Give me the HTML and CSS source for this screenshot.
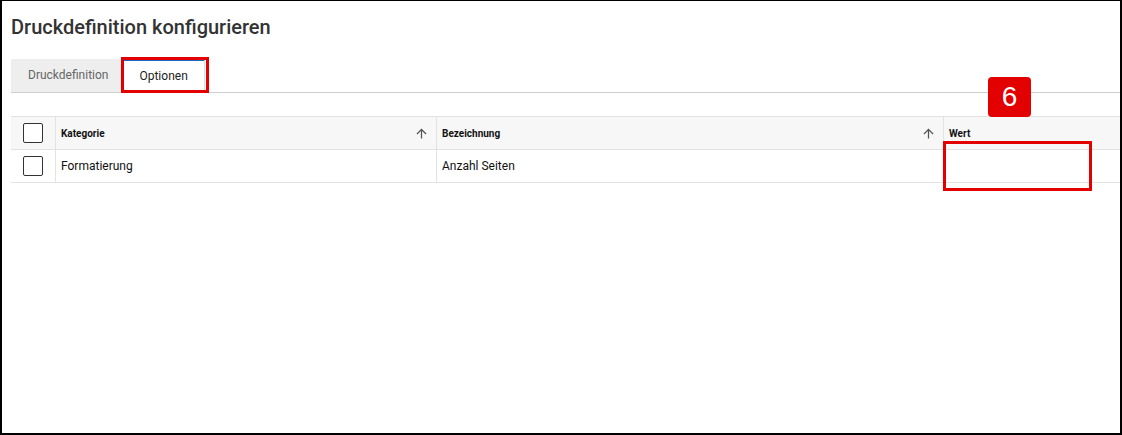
FILE: index.html
```html
<!DOCTYPE html>
<html lang="de">

<head>
    <meta charset="UTF-8">
    <meta name="viewport" content="width=device-width, initial-scale=1.0">
    <title>Druckdefinition konfigurieren</title>
    <link rel="stylesheet" href="styles.css">
</head>

<body>
    <div class="frame">
        <h1 class="page-title">Druckdefinition konfigurieren</h1>

        <!-- Tabs -->
        <div class="tabs">
            <div class="tab">Druckdefinition</div>
            <div class="tab active">Optionen</div>
        </div>

        <!-- Options table -->
        <div class="grid">
            <div class="row head">
                <div class="cell check"><span class="checkbox"></span></div>
                <div class="cell">Kategorie
                    <svg class="sort" viewBox="0 0 24 24"><path d="M4 12l1.41 1.41L11 7.83V20h2V7.83l5.58 5.59L20 12l-8-8-8 8z"/></svg>
                </div>
                <div class="cell">Bezeichnung
                    <svg class="sort" viewBox="0 0 24 24"><path d="M4 12l1.41 1.41L11 7.83V20h2V7.83l5.58 5.59L20 12l-8-8-8 8z"/></svg>
                </div>
                <div class="cell">Wert</div>
            </div>
            <div class="row">
                <div class="cell check"><span class="checkbox"></span></div>
                <div class="cell">Formatierung</div>
                <div class="cell">Anzahl Seiten</div>
                <div class="cell"></div>
            </div>
        </div>

        <!-- Annotations -->
        <div class="mark mark-tab"></div>
        <div class="mark mark-value"></div>
        <div class="badge">6</div>
    </div>
</body>

</html>
```

FILE: styles.css
```css
* {
    margin: 0;
    padding: 0;
    box-sizing: border-box;
}

body {
    font-family: 'Roboto', 'Liberation Sans', sans-serif;
    background: #fff;
    color: #222;
}

.frame {
    position: relative;
    height: 435px;
    border-style: solid;
    border-color: #000;
    border-width: 1px 2px 2px 2px;
    padding: 14px 0 0 9px;
}

.page-title {
    font-size: 20px;
    font-weight: 500;
    line-height: 24px;
    color: #333;
}

.tabs {
    display: flex;
    gap: 2px;
    margin-top: 20px;
    border-bottom: 1px solid #cfcfcf;
}

.tab {
    height: 33px;
    line-height: 33px;
    padding: 0 14px 0 17px;
    font-size: 12px;
    color: #666;
    background-color: #eeeeee;
}

.tab.active {
    background-color: #fff;
    color: #222;
    border-top: 2px solid #1e66c8;
    border-right: 1px solid #dedede;
    line-height: 31px;
    padding: 0 16px 0 15px;
}

.grid {
    margin-top: 23px;
    border-top: 1px solid #e3e3e3;
}

.row {
    display: grid;
    grid-template-columns: 44px 381px 507px 1fr;
    height: 33px;
    border-bottom: 1px solid #e3e3e3;
    font-size: 12px;
    color: #111;
}

.row.head {
    background-color: #f7f7f7;
    font-size: 10px;
    font-weight: 700;
    color: #111;
}

.cell {
    display: flex;
    align-items: center;
    justify-content: space-between;
    padding: 0 7px 0 5px;
    border-left: 1px solid #e3e3e3;
}

.cell.check {
    border-left: none;
    justify-content: center;
    padding: 0;
}

.checkbox {
    width: 20px;
    height: 20px;
    border: 1.5px solid #333;
    border-radius: 2px;
    background: #fff;
}

.sort {
    width: 15px;
    height: 15px;
    fill: #555;
}

.mark {
    position: absolute;
    border: 3px solid #e30000;
}

.mark-tab {
    left: 119px;
    top: 56px;
    width: 88px;
    height: 36px;
}

.mark-value {
    left: 941px;
    top: 140px;
    width: 149px;
    height: 50px;
}

.badge {
    position: absolute;
    left: 986px;
    top: 76px;
    width: 43px;
    height: 40px;
    border-radius: 4px;
    background-color: #e30000;
    color: #fff;
    font-family: 'Liberation Sans', Arial, sans-serif;
    font-size: 28px;
    line-height: 40px;
    text-align: center;
}
```
